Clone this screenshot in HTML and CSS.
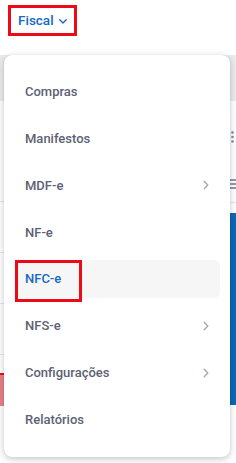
FILE: index.html
```html
<!DOCTYPE html>
<html lang="pt-BR">
<head>
<meta charset="utf-8">
<title>Fiscal</title>
<link rel="stylesheet" href="styles.css">
</head>
<body>
<div class="page">
  <header class="topbar">
    <button class="fiscal">Fiscal
      <svg class="caret" width="8" height="5" viewBox="0 0 8 5"><path d="M0.8 0.8 L4 4 L7.2 0.8" fill="none" stroke="currentColor" stroke-width="1.4" stroke-linecap="round" stroke-linejoin="round"/></svg>
    </button>
  </header>
  <div class="band"></div>
  <div class="content">
    <div class="table">
      <div class="row row-head"></div>
      <div class="row"></div>
      <div class="row"></div>
      <div class="row"></div>
      <div class="spacer"></div>
      <div class="row-alert"></div>
    </div>
    <div class="side">
      <svg class="dots" width="3" height="12" viewBox="0 0 3 12"><circle cx="1.5" cy="1.5" r="1.3" fill="#7f8aa3"/><circle cx="1.5" cy="6" r="1.3" fill="#7f8aa3"/><circle cx="1.5" cy="10.5" r="1.3" fill="#7f8aa3"/></svg>
      <svg class="lines" width="8" height="10" viewBox="0 0 8 10"><path d="M0 1 H8 M0 5 H8 M0 9 H8" stroke="#6f7a8f" stroke-width="1.4"/></svg>
      <div class="side-line"></div>
      <div class="blue-panel"></div>
    </div>
  </div>

  <nav class="dropdown">
    <ul class="menu">
      <li class="item">Compras</li>
      <li class="item">Manifestos</li>
      <li class="item">MDF-e <svg class="chev" width="6" height="10" viewBox="0 0 6 10"><path d="M1.2 1.2 L4.8 5 L1.2 8.8" fill="none" stroke="currentColor" stroke-width="1.3" stroke-linecap="round" stroke-linejoin="round"/></svg></li>
      <li class="item">NF-e</li>
      <li class="item active">NFC-e</li>
      <li class="item">NFS-e <svg class="chev" width="6" height="10" viewBox="0 0 6 10"><path d="M1.2 1.2 L4.8 5 L1.2 8.8" fill="none" stroke="currentColor" stroke-width="1.3" stroke-linecap="round" stroke-linejoin="round"/></svg></li>
      <li class="item">Configurações <svg class="chev" width="6" height="10" viewBox="0 0 6 10"><path d="M1.2 1.2 L4.8 5 L1.2 8.8" fill="none" stroke="currentColor" stroke-width="1.3" stroke-linecap="round" stroke-linejoin="round"/></svg></li>
      <li class="item">Relatórios</li>
    </ul>
  </nav>
</div>
</body>
</html>
```

FILE: styles.css
```css
* { box-sizing: border-box; }
html, body { margin: 0; padding: 0; background: #fff; }
body { font-family: Roboto, "Noto Sans", "Liberation Sans", sans-serif; }

.page {
  position: relative;
  width: 236px;
  height: 463px;
  overflow: hidden;
}

.topbar {
  height: 55px;
  padding: 5px 0 0 8px;
}

.fiscal {
  display: flex;
  align-items: center;
  gap: 5px;
  width: 69px;
  height: 31px;
  margin: 0;
  padding: 0 0 0 7px;
  border: 3px solid #ee0a14;
  background: #fff;
  color: #1769c2;
  font-family: Roboto, "Noto Sans", sans-serif;
  font-size: 13.5px;
  font-weight: 500;
  line-height: 1;
}
.caret { margin-top: 1px; }

.band {
  height: 46px;
  background: #e9ebec;
}

.content {
  display: flex;
  height: 362px;
}

.table { flex: 1; }
.row {
  height: 51px;
  border-bottom: 1px solid #e3e5e8;
}
.row-head { height: 101px; }
.spacer { height: 18px; }
.row-alert {
  height: 33px;
  background: #e88088;
  border-top: 2px solid #e0141f;
}

.side {
  width: 6px;
  display: flex;
  flex-direction: column;
  align-items: flex-start;
}
.dots { margin: 30px 0 0 1px; }
.lines { margin: 36px 0 0 -2px; }
.side-line {
  width: 6px;
  height: 1px;
  margin-top: 13px;
  background: #e3e5e8;
}
.blue-panel {
  width: 6px;
  height: 192px;
  margin-top: 10px;
  background: #0c68b4;
}

.dropdown {
  position: absolute;
  left: 4px;
  top: 55px;
  width: 226px;
  height: 402px;
  background: #fff;
  border-radius: 8px;
  box-shadow: 0 2px 7px rgba(0, 0, 0, 0.22), 0 0 1px rgba(0, 0, 0, 0.15);
  padding: 17.5px 10px 18.5px 11px;
}

.menu {
  list-style: none;
  margin: 0;
  padding: 0;
  display: flex;
  flex-direction: column;
  gap: 8.86px;
}

.item {
  position: relative;
  height: 38px;
  display: flex;
  align-items: center;
  justify-content: space-between;
  padding: 0 11px 0 10px;
  border-radius: 6px;
  color: #5d6175;
  font-size: 13px;
  font-weight: 500;
}

.chev { color: #a4a7b5; }

.item.active {
  background: #f6f6f7;
  color: #1769c2;
}
.item.active::after {
  content: "";
  position: absolute;
  left: 0;
  top: 0;
  width: 61px;
  height: 36px;
  border: 3px solid #ee0a14;
}
```
